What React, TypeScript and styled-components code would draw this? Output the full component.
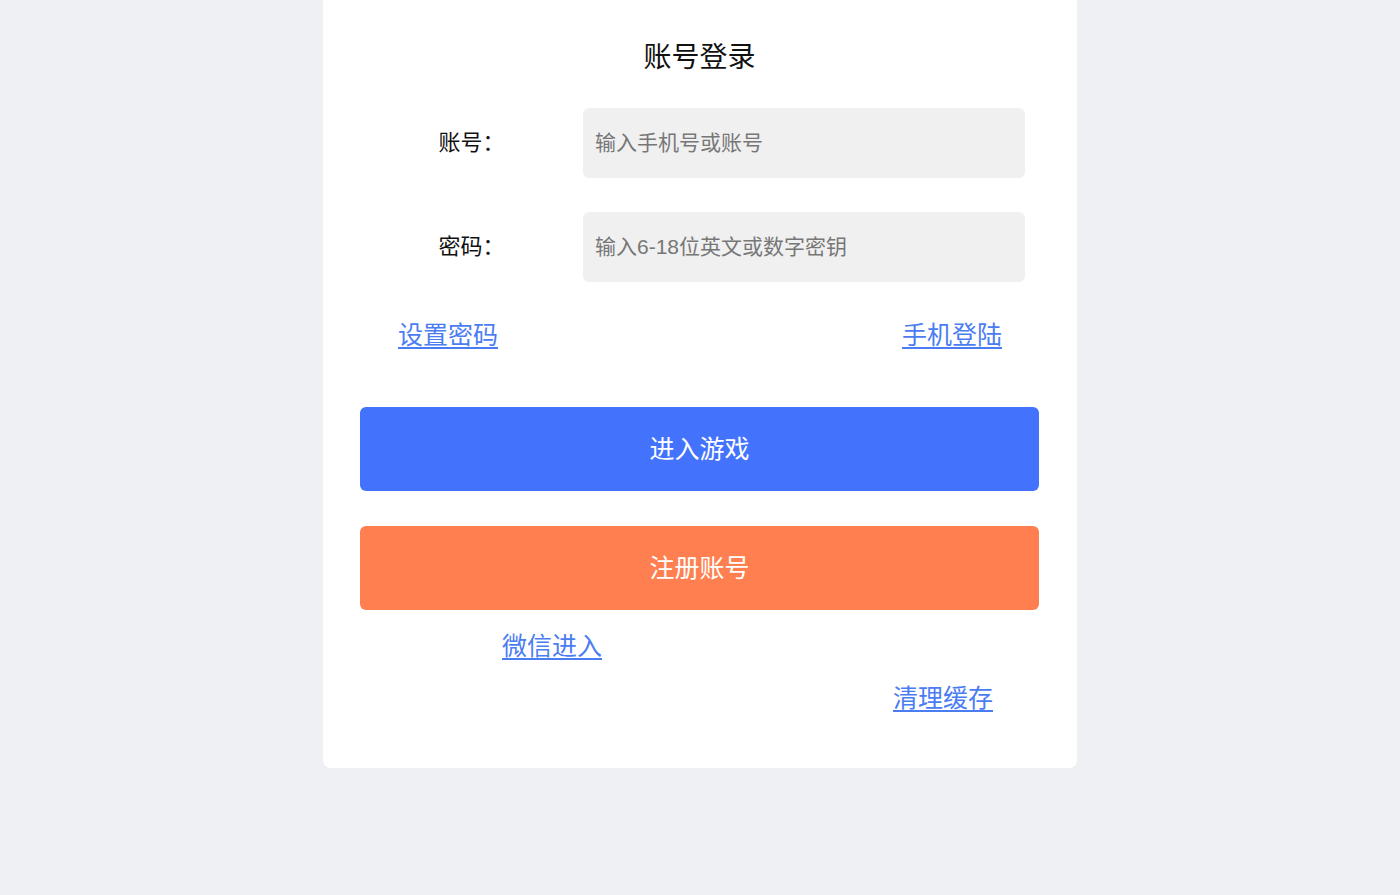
import styled, { createGlobalStyle } from 'styled-components';

const GlobalStyle = createGlobalStyle`
  body {
    margin: 0;
    background: #eef0f3;
    font-family: "Liberation Sans", "Noto Sans CJK SC", sans-serif;
  }
`;

const Page = styled.div`
  min-height: 895px;
  display: flex;
  justify-content: center;
  align-items: flex-start;
`;

const Card = styled.div`
  width: 754px;
  box-sizing: border-box;
  background: #ffffff;
  border-radius: 0 0 8px 8px;
  padding: 38px 38px 55px 37px;
  display: flex;
  flex-direction: column;
`;

const Title = styled.h2`
  margin: 0 0 30px;
  font-size: 28px;
  line-height: 40px;
  font-weight: 400;
  color: #111;
  text-align: center;
`;

const FieldRow = styled.div<{ $gap?: number }>`
  display: flex;
  align-items: center;
  margin-bottom: ${(p) => p.$gap ?? 0}px;
`;

const Label = styled.label`
  width: 223px;
  font-size: 22px;
  line-height: 30px;
  padding-bottom: 1px;
  color: #111;
  text-align: center;
`;

const Input = styled.input`
  width: 442px;
  height: 70px;
  box-sizing: border-box;
  border: none;
  outline: none;
  border-radius: 6px;
  background: #f0f0f0;
  padding: 0 12px;
  font-family: inherit;
  font-size: 21px;
  color: #333;

  &::placeholder {
    color: #777;
  }
`;

const LinkRow = styled.div`
  display: flex;
  justify-content: space-between;
  padding: 0 37px 0 38px;
  margin: 38px 0 57px;
`;

const Link = styled.a<{ $align?: 'left' | 'right'; $offset?: number }>`
  font-size: 25px;
  line-height: 30px;
  color: #4a7cf2;
  text-decoration: underline;
  text-underline-offset: 3px;
  cursor: pointer;
  align-self: ${(p) => (p.$align === 'right' ? 'flex-end' : 'flex-start')};
  margin-left: ${(p) => (p.$align === 'right' ? 0 : p.$offset ?? 0)}px;
  margin-right: ${(p) => (p.$align === 'right' ? p.$offset ?? 0 : 0)}px;
`;

const Button = styled.button<{ $color: string }>`
  height: 84px;
  width: 100%;
  border: none;
  border-radius: 6px;
  background: ${(p) => p.$color};
  color: #fff;
  font-family: inherit;
  font-size: 25px;
  padding: 0 0 5px;
  cursor: pointer;
`;

const ButtonStack = styled.div`
  display: flex;
  flex-direction: column;
  gap: 35px;
  margin-bottom: 21px;
`;

const ExtraLinks = styled.div`
  display: flex;
  flex-direction: column;
  gap: 22px;
`;

export default function App() {
  return (
    <>
      <GlobalStyle />
      <Page>
        <Card>
          <Title>账号登录</Title>
          <FieldRow $gap={34}>
            <Label>账号：</Label>
            <Input placeholder="输入手机号或账号" />
          </FieldRow>
          <FieldRow>
            <Label>密码：</Label>
            <Input type="password" placeholder="输入6-18位英文或数字密钥" />
          </FieldRow>
          <LinkRow>
            <Link>设置密码</Link>
            <Link>手机登陆</Link>
          </LinkRow>
          <ButtonStack>
            <Button $color="#4373fd">进入游戏</Button>
            <Button $color="#ff7f50">注册账号</Button>
          </ButtonStack>
          <ExtraLinks>
            <Link $offset={142}>微信进入</Link>
            <Link $align="right" $offset={46}>清理缓存</Link>
          </ExtraLinks>
        </Card>
      </Page>
    </>
  );
}
